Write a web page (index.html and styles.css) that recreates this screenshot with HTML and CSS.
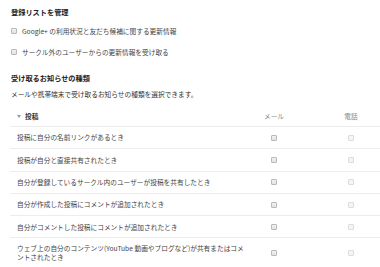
FILE: index.html
```html
<!DOCTYPE html>
<html lang="ja">
<head>
    <meta charset="UTF-8">
    <meta name="viewport" content="width=device-width, initial-scale=1.0">
    <title>お知らせの設定</title>
    <link rel="stylesheet" href="styles.css">
</head>
<body>
    <div class="page">
        <!-- Subscriptions -->
        <h2 class="section-title">登録リストを管理</h2>
        <ul class="options">
            <li><input type="checkbox" class="check"> Google+ の利用状況と友だち候補に関する更新情報</li>
            <li><input type="checkbox" class="check"> サークル外のユーザーからの更新情報を受け取る</li>
        </ul>

        <!-- Notification types -->
        <h2 class="section-title second">受け取るお知らせの種類</h2>
        <p class="desc">メールや携帯端末で受け取るお知らせの種類を選択できます。</p>

        <div class="notify-table">
            <div class="row head">
                <div class="label"><span class="arrow"></span>投稿</div>
                <div class="col mail">メール</div>
                <div class="col phone">電話</div>
            </div>
            <div class="row">
                <div class="label">投稿に自分の名前リンクがあるとき</div>
                <div class="col mail"><input type="checkbox" class="check"></div>
                <div class="col phone"><input type="checkbox" class="check" disabled></div>
            </div>
            <div class="row">
                <div class="label">投稿が自分と直接共有されたとき</div>
                <div class="col mail"><input type="checkbox" class="check"></div>
                <div class="col phone"><input type="checkbox" class="check" disabled></div>
            </div>
            <div class="row">
                <div class="label">自分が登録しているサークル内のユーザーが投稿を共有したとき</div>
                <div class="col mail"><input type="checkbox" class="check"></div>
                <div class="col phone"><input type="checkbox" class="check" disabled></div>
            </div>
            <div class="row">
                <div class="label">自分が作成した投稿にコメントが追加されたとき</div>
                <div class="col mail"><input type="checkbox" class="check"></div>
                <div class="col phone"><input type="checkbox" class="check" disabled></div>
            </div>
            <div class="row">
                <div class="label">自分がコメントした投稿にコメントが追加されたとき</div>
                <div class="col mail"><input type="checkbox" class="check"></div>
                <div class="col phone"><input type="checkbox" class="check" disabled></div>
            </div>
            <div class="row tall">
                <div class="label">ウェブ上の自分のコンテンツ(YouTube 動画やブログなど)が共有またはコメントされたとき</div>
                <div class="col mail"><input type="checkbox" class="check"></div>
                <div class="col phone"><input type="checkbox" class="check" disabled></div>
            </div>
        </div>
    </div>
</body>
</html>
```

FILE: styles.css
```css
/* General styles */
* {
    margin: 0;
    padding: 0;
    box-sizing: border-box;
}

body {
    font-family: "Noto Sans CJK JP", "Noto Sans", sans-serif;
    font-size: 6.7px;
    line-height: 10px;
    color: #444;
    background: #fff;
    overflow: hidden;
}

.page {
    padding: 7px 0 0 10px;
}

.section-title {
    font-size: 7.2px;
    font-weight: bold;
    color: #222;
    line-height: 10px;
    margin-left: 1px;
}

.section-title.second {
    margin-top: 16px;
}

/* Checkbox list */
.options {
    list-style: none;
    margin-top: 9px;
}

.options li {
    display: flex;
    align-items: center;
    gap: 5px;
    margin-left: 1px;
    height: 10px;
    margin-bottom: 11px;
    color: #444;
}

.options li:last-child {
    margin-bottom: 0;
}

.check {
    appearance: none;
    -webkit-appearance: none;
    width: 6px;
    height: 6px;
    border: 1px solid #b9b9b9;
    border-radius: 1px;
    background: linear-gradient(#f2f2f2, #e2e2e2);
    flex-shrink: 0;
    margin: 0;
}

.check:disabled {
    border-color: #dcdcdc;
    background: #f5f5f5;
}

.desc {
    margin-top: 6px;
    margin-left: 1px;
    color: #333;
}

/* Notification table */
.notify-table {
    margin-top: 7px;
    width: 380px;
}

.row {
    display: flex;
    align-items: center;
    height: 22.3px;
    border-top: 1px solid #ededed;
}

.row.head {
    border-top: none;
    height: 20px;
}

.row.tall {
    height: 30px;
}

.label {
    width: 248px;
    padding: 0 9.6px 0 7px;
    line-height: 8.5px;
}

.row.head .label {
    font-weight: bold;
    color: #333;
    display: flex;
    align-items: center;
}

.arrow {
    display: inline-block;
    width: 0;
    height: 0;
    border-left: 2.5px solid transparent;
    border-right: 2.5px solid transparent;
    border-top: 3px solid #999;
    margin: 0 4px 0 0;
}

.col {
    width: 32px;
    display: flex;
    justify-content: center;
    color: #888;
}

.col.phone {
    margin-left: 45px;
}
```
